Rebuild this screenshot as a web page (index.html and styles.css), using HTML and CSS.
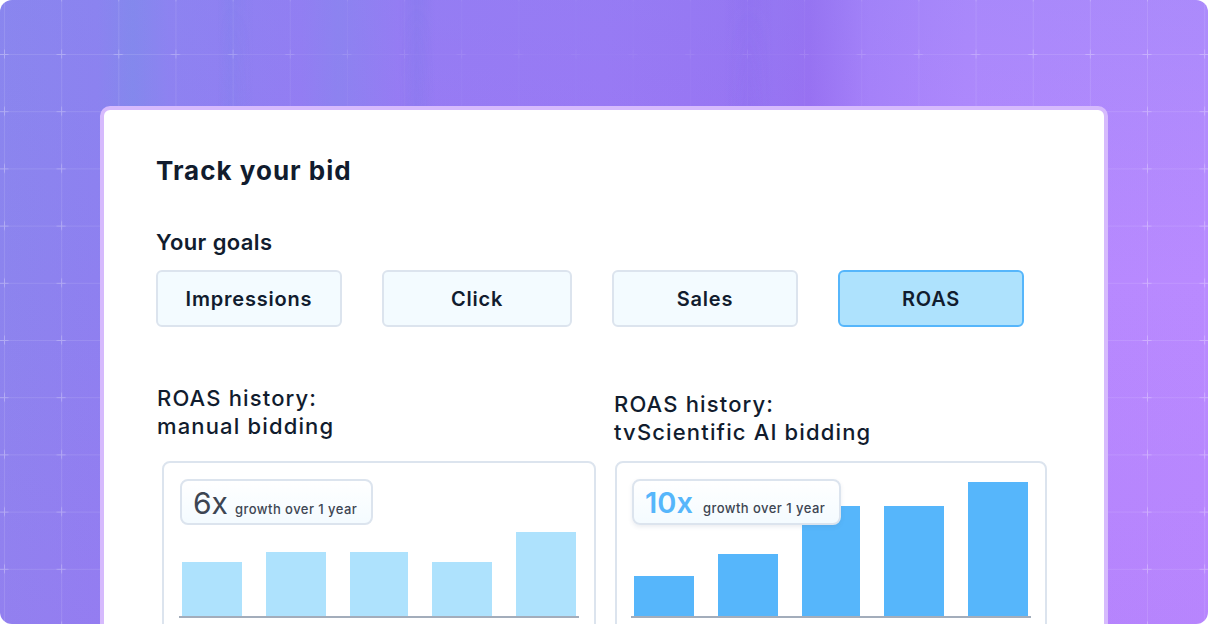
FILE: index.html
```html
<!DOCTYPE html>
<html lang="en">
<head>
<meta charset="utf-8">
<title>Track your bid</title>
<link rel="stylesheet" href="styles.css">
</head>
<body>
<div class="frame">
  <div class="streaks"></div>
  <svg class="grid" width="1208" height="624" aria-hidden="true">
    <defs>
      <pattern id="g" patternUnits="userSpaceOnUse" x="4" y="-3.2" width="57.15" height="57.2">
        <path d="M0 0.5H57.15M0.5 0V57.2" stroke="rgba(255,255,255,0.11)" stroke-width="1" fill="none"/>
        <path d="M0 0.5H4.5M52.65 0.5H57.15M0.5 0V4.5M0.5 52.7V57.2" stroke="rgba(255,255,255,0.24)" stroke-width="1" fill="none"/>
      </pattern>
    </defs>
    <rect width="1208" height="624" fill="url(#g)"/>
  </svg>
  <div class="card">
    <h1 class="title">Track your bid</h1>
    <h2 class="subtitle">Your goals</h2>
    <div class="goals">
      <div class="goal">Impressions</div>
      <div class="goal goal--wide">Click</div>
      <div class="goal">Sales</div>
      <div class="goal goal--active">ROAS</div>
    </div>
    <div class="charts">
      <div class="col col--left">
        <h3 class="chart-title">ROAS history:<br>manual bidding</h3>
        <div class="chart">
          <div class="badge"><span class="big">6x</span><span class="small">growth over 1 year</span></div>
          <div class="bars">
            <div class="bar light" style="height:54px"></div>
            <div class="bar light" style="height:64px"></div>
            <div class="bar light narrow" style="height:64px"></div>
            <div class="bar light" style="height:54px"></div>
            <div class="bar light" style="height:84px"></div>
          </div>
        </div>
      </div>
      <div class="col col--right">
        <h3 class="chart-title">ROAS history:<br>tvScientific AI bidding</h3>
        <div class="chart chart--right">
          <div class="badge badge--ai"><span class="big big--ai">10x</span><span class="small small--ai">growth over 1 year</span></div>
          <div class="bars">
            <div class="bar dark" style="height:40px"></div>
            <div class="bar dark" style="height:62px"></div>
            <div class="bar dark narrow" style="height:110px"></div>
            <div class="bar dark" style="height:110px"></div>
            <div class="bar dark" style="height:134px"></div>
          </div>
        </div>
      </div>
    </div>
  </div>
</div>
</body>
</html>
```

FILE: styles.css
```css
* { box-sizing: border-box; }
html, body { margin: 0; padding: 0; background: #ffffff; }
body { font-family: Inter, "Noto Sans", sans-serif; color: #111c2e; }

.frame {
  position: relative;
  width: 1208px;
  height: 624px;
  overflow: hidden;
  border-radius: 12px;
  padding: 106px 0 0 100px;
  background:
    linear-gradient(180deg, rgba(130,140,240,0.25) 0%, rgba(130,140,240,0) 45%, rgba(175,110,245,0.18) 100%),
    linear-gradient(90deg, #8c84ee 0%, #8e80f0 8%, #8487ec 11%, #9080f1 14%, #967af3 25%, #8f80f0 28%, #9a78f4 33%, #9d76f5 50%, #9b70f3 64%, #9c6cf2 67%, #ac7ffb 72%, #b587fe 80%, #b98aff 100%);
}
.streaks {
  position: absolute;
  inset: 0;
  background:
    linear-gradient(90deg, rgba(255,255,255,0) 0%, rgba(255,255,255,0) 18%, rgba(120,130,235,0.25) 19%, rgba(255,255,255,0) 21%, rgba(255,255,255,0) 33%, rgba(115,120,230,0.25) 34.5%, rgba(255,255,255,0) 36%, rgba(255,255,255,0) 60%, rgba(130,100,235,0.18) 62%, rgba(255,255,255,0) 64%);
  -webkit-mask-image: linear-gradient(180deg, #000 0%, rgba(0,0,0,0.5) 40%, rgba(0,0,0,0) 70%);
  mask-image: linear-gradient(180deg, #000 0%, rgba(0,0,0,0.5) 40%, rgba(0,0,0,0) 70%);
}
.grid {
  position: absolute;
  left: 0;
  top: 0;
  -webkit-mask-image: linear-gradient(90deg, #000 0%, #000 12%, rgba(0,0,0,0.35) 30%, rgba(0,0,0,0.15) 50%, rgba(0,0,0,0.35) 68%, #000 85%, #000 100%);
  mask-image: linear-gradient(90deg, #000 0%, #000 12%, rgba(0,0,0,0.35) 30%, rgba(0,0,0,0.15) 50%, rgba(0,0,0,0.35) 68%, #000 85%, #000 100%);
}

.card {
  position: relative;
  width: 1008px;
  height: 640px;
  background: #ffffff;
  border: 4px solid #d6bafd;
  border-radius: 10px;
  padding: 45px 0 0 52px;
}

.title {
  margin: 0;
  font-size: 26px;
  line-height: 32px;
  font-weight: 700;
  letter-spacing: 1px;
}
.subtitle {
  margin: 41px 0 0;
  font-size: 22px;
  line-height: 28px;
  font-weight: 600;
  letter-spacing: 0.4px;
}

.goals {
  display: flex;
  gap: 40px;
  margin-top: 14px;
}
.goal {
  width: 186px;
  height: 57px;
  display: flex;
  align-items: center;
  justify-content: center;
  background: #f3fbff;
  border: 2px solid #dce4ee;
  border-radius: 6px;
  font-size: 20px;
  font-weight: 600;
  letter-spacing: 0.8px;
}
.goal--wide { width: 190px; }
.goal--active { background: #aee2fd; border-color: #56b6fb; }

.charts {
  display: flex;
  margin-top: 57px;
}
.col { display: flex; flex-direction: column; }
.col--left { width: 456px; }
.col--right { width: 436px; }

.chart-title {
  margin: 0 0 21px 1px;
  font-size: 22px;
  line-height: 28px;
  font-weight: 500;
  letter-spacing: 1.15px;
}
.col--right .chart-title { margin: 6px 0 15px 2px; }

.chart {
  position: relative;
  width: 434px;
  margin-left: 6px;
  border: 2px solid #dce4ee;
  border-radius: 8px;
  padding: 0 15px 40px;
}
.chart--right { width: 432px; margin-left: 3px; padding: 0 14px 40px; }

.bars {
  height: 155px;
  display: flex;
  align-items: flex-end;
  gap: 24px;
  padding: 0 3px;
  border-bottom: 2px solid #a3adbb;
}
.bar { width: 60px; flex: none; }
.bar.narrow { width: 58px; }
.light { background: #aee2fd; }
.dark { background: #56b6fb; }

.badge {
  position: absolute;
  left: 16px;
  top: 16px;
  height: 46px;
  display: flex;
  align-items: baseline;
  padding: 7px 14px 0 11px;
  border: 2px solid #dce4ee;
  border-radius: 8px;
  background: linear-gradient(180deg, #ffffff 0%, #f4fbff 100%);
  z-index: 1;
}
.badge--ai { box-shadow: 0 2px 4px rgba(90,110,140,0.12); left: 15px; }
.big {
  font-size: 30px;
  line-height: 30px;
  font-weight: 400;
  color: #3d4552;
}
.big--ai { color: #56b6fb; font-weight: 600; font-size: 29px; }
.small {
  margin-left: 7px;
  font-size: 13px;
  font-weight: 500;
  color: #3d4552;
  letter-spacing: 0.45px;
}
.small--ai { margin-left: 10px; }
```
